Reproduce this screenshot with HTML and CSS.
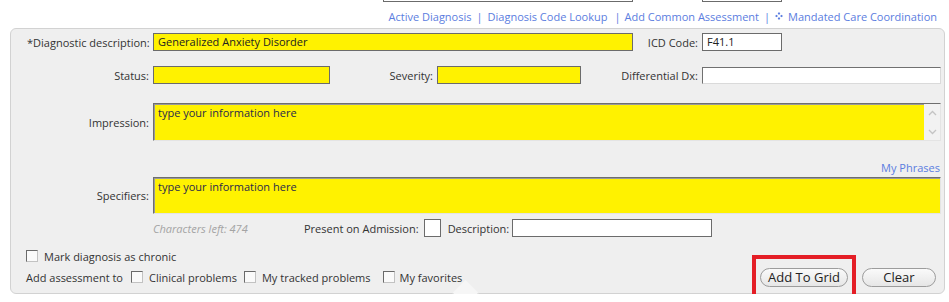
FILE: index.html
```html
<!DOCTYPE html>
<html lang="en">
<head>
  <meta charset="UTF-8">
  <title>Assessment</title>
  <link rel="stylesheet" href="styles.css">
</head>
<body>
  <div class="prev">
    <span class="prev-box prev-desc"></span>
    <span class="prev-box prev-code"></span>
  </div>

  <div class="links">
    <a href="#">Active Diagnosis</a>
    <span class="sep">|</span>
    <a href="#">Diagnosis Code Lookup</a>
    <span class="sep sep-wide">|</span>
    <a href="#">Add Common Assessment</a>
    <span class="sep">|</span>
    <svg class="mcc-icon" width="8" height="8" viewBox="0 0 8 8">
      <path d="M4 0 L5.3 1.5 L4 3 L2.7 1.5 Z M4 5 L5.3 6.5 L4 8 L2.7 6.5 Z M0 4 L1.5 2.7 L3 4 L1.5 5.3 Z M5 4 L6.5 2.7 L8 4 L6.5 5.3 Z" fill="#5b7de0"/>
    </svg>
    <a href="#">Mandated Care Coordination</a>
  </div>

  <div class="panel">
    <div class="row">
      <span class="lbl lbl-main">*Diagnostic description:</span>
      <div class="field yellow w-desc">Generalized Anxiety Disorder</div>
      <span class="lbl lbl-code">ICD Code:</span>
      <div class="field white w-code">F41.1</div>
    </div>

    <div class="row row-status">
      <span class="lbl lbl-main">Status:</span>
      <div class="field yellow w-status"></div>
      <span class="lbl lbl-sev">Severity:</span>
      <div class="field yellow w-sev"></div>
      <span class="lbl lbl-diff">Differential Dx:</span>
      <div class="field inset w-diff"></div>
    </div>

    <div class="row row-impression">
      <span class="lbl lbl-main">Impression:</span>
      <div class="area area-tall">
        <div class="area-text">type your information here</div>
        <div class="scroll">
          <svg width="9" height="6" viewBox="0 0 9 6"><path d="M1 5 L4.5 1.5 L8 5" fill="none" stroke="#c4c4c4" stroke-width="1.3"/></svg>
          <svg width="9" height="6" viewBox="0 0 9 6"><path d="M1 1 L4.5 4.5 L8 1" fill="none" stroke="#c4c4c4" stroke-width="1.3"/></svg>
        </div>
      </div>
    </div>

    <div class="phrases"><a href="#">My Phrases</a></div>

    <div class="row row-specifiers">
      <span class="lbl lbl-main">Specifiers:</span>
      <div class="area">
        <div class="area-text">type your information here</div>
      </div>
    </div>

    <div class="row row-admission">
      <span class="chars-left">Characters left: 474</span>
      <span class="lbl">Present on Admission:</span>
      <span class="poa-box"></span>
      <span class="lbl lbl-descr">Description:</span>
      <div class="field white w-descr"></div>
    </div>

    <div class="bottom">
      <div class="checks">
        <label class="chk-row">
          <span class="cb"></span>
          <span>Mark diagnosis as chronic</span>
        </label>
        <div class="chk-row chk-row-add">
          <span>Add assessment to</span>
          <span class="cb cb-first"></span>
          <span>Clinical problems</span>
          <span class="cb"></span>
          <span>My tracked problems</span>
          <span class="cb cb-wide"></span>
          <span>My favorites</span>
        </div>
      </div>
      <div class="btns">
        <span class="hl"><button class="btn btn-add">Add To Grid</button></span>
        <button class="btn btn-clear">Clear</button>
      </div>
    </div>
  </div>
</body>
</html>
```

FILE: styles.css
```css
body {
  margin: 0;
  font-family: "Open Sans", "Noto Sans", sans-serif;
  font-size: 11px;
  color: #333;
  background: #fff;
}

a {
  color: #5b7de0;
  text-decoration: none;
}

/* bottom edge of the inputs scrolled above */
.prev {
  display: flex;
  height: 2px;
  padding-left: 383px;
}

.prev-box {
  height: 2px;
  box-sizing: border-box;
  border: 1px solid #6b6b6b;
  border-top: 0;
}

.prev-desc {
  width: 250px;
}

.prev-code {
  width: 80px;
  margin-left: 69px;
}

.links {
  display: flex;
  justify-content: flex-end;
  align-items: center;
  height: 16px;
  margin-top: 6px;
  padding-right: 12px;
  color: #5b7de0;
}

.sep {
  margin: 0 5px;
}

.sep-wide {
  margin: 0 4px 0 7px;
}

.mcc-icon {
  margin-right: 5px;
}

.panel {
  position: relative;
  width: 935px;
  box-sizing: border-box;
  margin: 4px 0 0 10px;
  padding: 4px 3px 8px 16px;
  background: #efefef;
  border: 1px solid #d2d2d2;
  border-radius: 6px;
}

/* little pointer under the panel */
.panel::after {
  content: "";
  position: absolute;
  left: 445px;
  bottom: -10px;
  width: 18px;
  height: 18px;
  background: #f6f6f6;
  border-right: 1px solid #d2d2d2;
  border-bottom: 1px solid #d2d2d2;
  transform: rotate(45deg);
}

.row {
  display: flex;
  align-items: center;
}

.lbl {
  white-space: nowrap;
}

.lbl-main {
  width: 122px;
  margin-right: 4px;
  text-align: right;
}

.lbl-code,
.lbl-sev,
.lbl-diff {
  text-align: right;
  margin-right: 4px;
}

.lbl-code { width: 65px; }
.lbl-sev { width: 103px; }
.lbl-diff { width: 117px; }

.field {
  height: 18px;
  box-sizing: border-box;
  border: 1px solid #6b6b6b;
  padding: 0 4px;
  line-height: 16px;
  color: #222;
}

.yellow { background: #fff200; }
.white { background: #fff; }

.inset {
  background: #fff;
  border-color: #707070 #dadada #dadada #707070;
  height: 17px;
}

.w-desc { width: 480px; }
.w-code { width: 80px; }
.w-status { width: 177px; }
.w-sev { width: 144px; }
.w-diff { width: 239px; }
.w-descr { width: 200px; }

.row-status {
  margin-top: 15px;
}

.row-impression {
  margin-top: 19px;
}

.area {
  flex: 1;
  display: flex;
  height: 37px;
  box-sizing: border-box;
  background: #fff200;
  border: 1px solid;
  border-color: #6e6e6e #e4e4e4 #e4e4e4 #6e6e6e;
  box-shadow: inset 1px 1px 0 #9a9a9a;
}

.area-tall {
  height: 38px;
}

.area-text {
  flex: 1;
  padding: 1px 4px;
  line-height: 16px;
  color: #2a2a4a;
}

.scroll {
  width: 16px;
  display: flex;
  flex-direction: column;
  justify-content: space-between;
  align-items: center;
  padding: 6px 0 5px;
  background: #f2f2f2;
}

.phrases {
  margin-top: 19px;
  height: 16px;
  line-height: 16px;
  text-align: right;
  padding-right: 1px;
}

.row-specifiers {
  margin-top: 1px;
}

.row-admission {
  margin-top: 5px;
  height: 18px;
}

.chars-left {
  margin-left: 126px;
  width: 151px;
  font-style: italic;
  color: #a4a4a4;
}

.poa-box {
  width: 17px;
  height: 18px;
  box-sizing: border-box;
  margin-left: 5px;
  background: #fff;
  border: 1px solid #6b6b6b;
}

.lbl-descr {
  margin: 0 3px 0 7px;
}

.bottom {
  display: flex;
  justify-content: space-between;
  align-items: flex-end;
  margin-top: 11px;
}

.chk-row {
  display: flex;
  align-items: center;
  height: 16px;
  margin-left: -1px;
}

.chk-row-add {
  margin-top: 5px;
}

.cb {
  width: 12px;
  height: 12px;
  box-sizing: border-box;
  margin: 0 6px 0 7px;
  background: #fafafa;
  border: 1px solid;
  border-color: #6a6a6a #c2c2c2 #c2c2c2 #6a6a6a;
}

.chk-row > .cb:first-child {
  margin-left: 0;
}

.cb-first {
  margin-left: 8px;
}

.cb-wide {
  margin-left: 12px;
  margin-right: 5px;
}

.btns {
  display: flex;
  gap: 14px;
  margin: 0 5px -2px 0;
}

.btn {
  height: 19px;
  padding: 0;
  font-family: inherit;
  font-size: 13px;
  line-height: 17px;
  color: #222;
  background: linear-gradient(#fafafa, #e6e6e6);
  border: 1px solid #9c9c9c;
  border-radius: 10px;
}

.btn-add { width: 88px; }
.btn-clear { width: 74px; }

/* red annotation frame over the button */
.hl {
  position: relative;
  display: flex;
}

.hl::after {
  content: "";
  position: absolute;
  top: -13px;
  bottom: -13px;
  left: -8px;
  right: -8px;
  border: 4px solid #e41e26;
}
```
